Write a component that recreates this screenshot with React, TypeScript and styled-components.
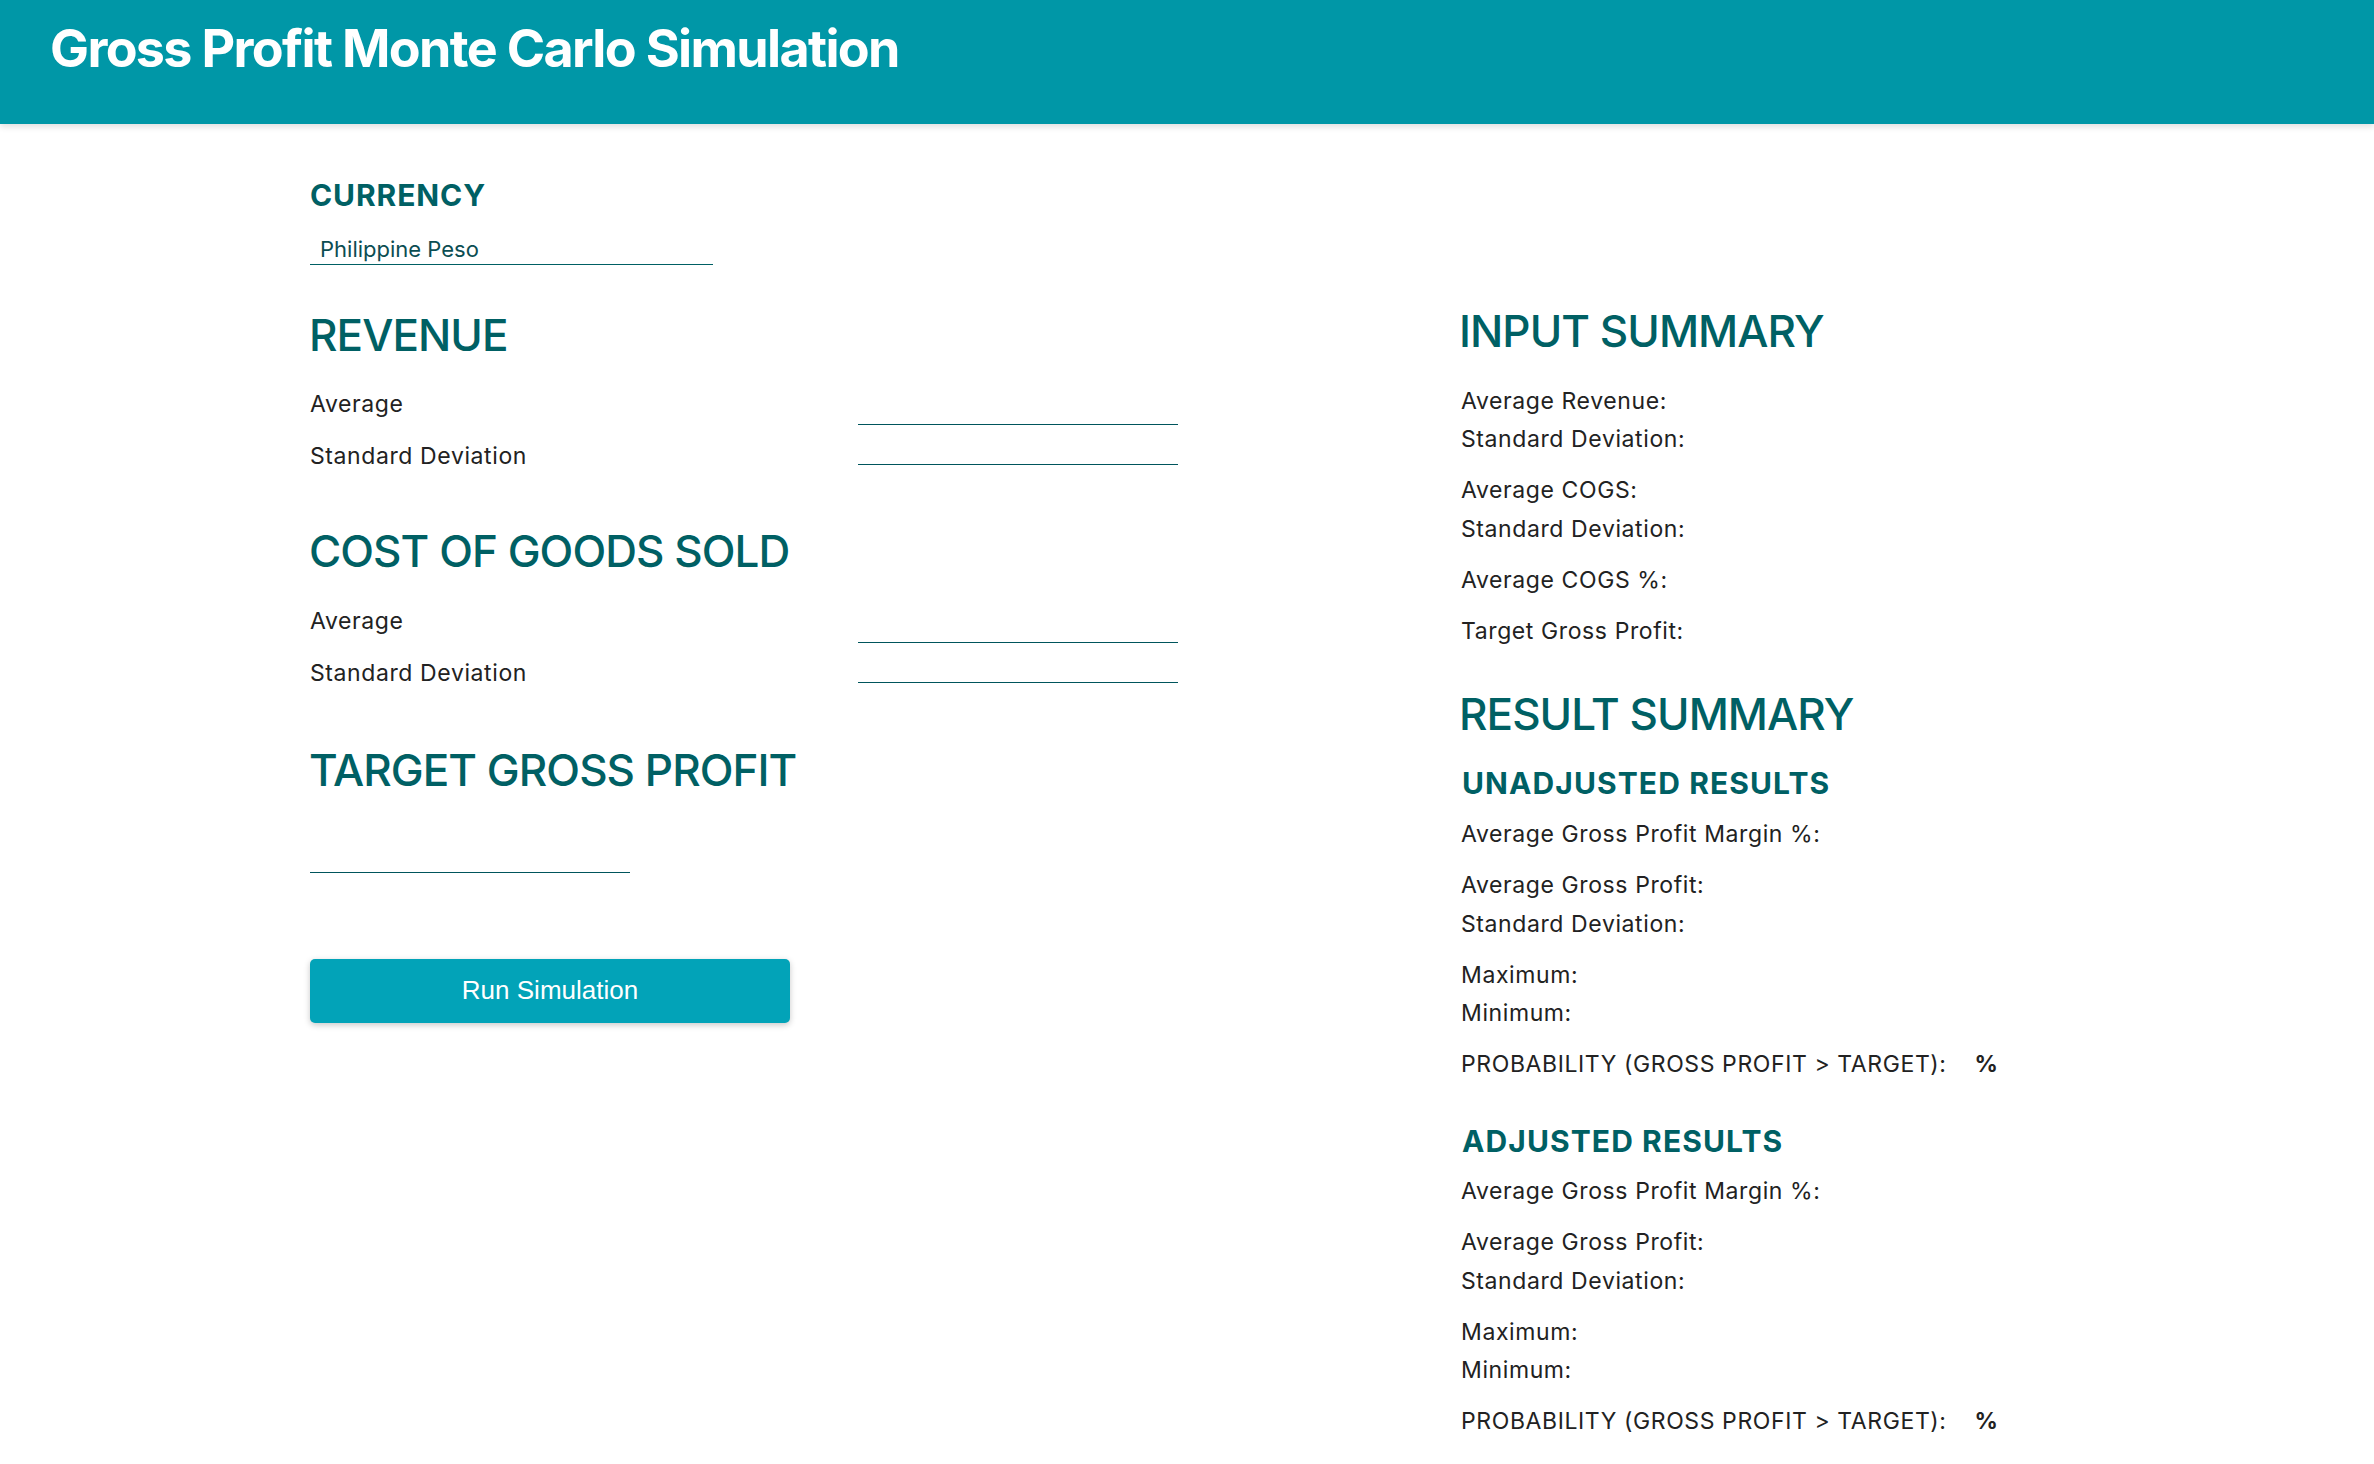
import React from "react";
import styled, { createGlobalStyle } from "styled-components";

const GlobalStyle = createGlobalStyle`
  html, body {
    margin: 0;
    padding: 0;
    background: #ffffff;
    font-family: Inter, "Noto Sans", "Liberation Sans", sans-serif;
    color: #222222;
  }
  * { box-sizing: border-box; }
`;

const Header = styled.header`
  height: 124px;
  background: #0097a7;
  padding: 18px 0 0 50px;
  box-shadow: 0 3px 6px rgba(0, 0, 0, 0.12);
  position: relative;
  z-index: 1;
`;

const Title = styled.h1`
  margin: 0;
  font-family: Inter, "Liberation Sans", sans-serif;
  font-weight: 700;
  font-size: 52px;
  line-height: 62.4px;
  color: #ffffff;
  letter-spacing: -1.65px;
`;

const Main = styled.main`
  display: grid;
  grid-template-columns: 1150px 1fr;
  padding: 53px 0 24px 310px;
`;

const LeftColumn = styled.section`
  display: flex;
  flex-direction: column;
`;

const RightColumn = styled.section`
  display: flex;
  flex-direction: column;
  padding-top: 127.6px;
`;

const FieldLabel = styled.label`
  display: block;
  font-weight: 700;
  font-size: 30px;
  line-height: 36px;
  color: #006064;
  letter-spacing: 0.9px;
`;

const CurrencySelect = styled.select`
  appearance: none;
  -webkit-appearance: none;
  margin-top: 16px;
  width: 403px;
  height: 36px;
  padding: 4px 0 0 10px;
  border: none;
  border-bottom: 1px solid #006064;
  border-radius: 0;
  background: transparent;
  font-family: Inter, "Liberation Sans", sans-serif;
  font-size: 22px;
  color: #0b4d52;
  outline: none;
`;

const SectionTitle = styled.h2<{ $top?: number }>`
  margin: ${(p) => p.$top ?? 0}px 0 0 -1px;
  font-weight: 500;
  font-size: 44px;
  line-height: 52.8px;
  color: #006064;
  letter-spacing: -0.95px;
`;

const SubTitle = styled.h3<{ $top?: number }>`
  margin: ${(p) => p.$top ?? 0}px 0 0 0;
  font-weight: 700;
  font-size: 30px;
  line-height: 36px;
  color: #006064;
  padding-left: 2px;
  letter-spacing: 1.1px;
`;

const FieldGrid = styled.div<{ $inputOffset: number }>`
  display: grid;
  grid-template-columns: 548px 320px;
  margin-top: 24px;

  & > div:last-child {
    padding-top: ${(p) => p.$inputOffset}px;
  }
`;

const LabelStack = styled.div`
  display: flex;
  flex-direction: column;
  gap: 14px;
`;

const InputStack = styled.div`
  display: flex;
  flex-direction: column;
  gap: 10px;
`;

const RowLabel = styled.span`
  font-size: 23px;
  line-height: 38px;
  color: #222222;
  letter-spacing: 0.6px;
`;

const LineInput = styled.input<{ $top?: number }>`
  display: block;
  width: 320px;
  height: 30px;
  margin-top: ${(p) => p.$top ?? 0}px;
  padding: 0 4px;
  border: none;
  border-bottom: 1px solid #00555c;
  background: transparent;
  font-family: Inter, "Liberation Sans", sans-serif;
  font-size: 22px;
  outline: none;
`;

const RunButton = styled.button`
  margin-top: 86px;
  width: 480px;
  height: 64px;
  border: none;
  border-radius: 5px;
  background: #02a3b8;
  color: #ffffff;
  font-family: "Liberation Sans", Arial, sans-serif;
  font-size: 26px;
  box-shadow: 0 2px 6px rgba(0, 0, 0, 0.22);
  cursor: pointer;
`;

const SummaryList = styled.div<{ $top: number }>`
  display: flex;
  flex-direction: column;
  gap: 12.5px;
  margin-top: ${(p) => p.$top}px;
  padding-left: 1px;
`;

const SummaryGroup = styled.div`
  display: flex;
  flex-direction: column;
`;

const SummaryRow = styled.div`
  font-size: 23px;
  line-height: 38.5px;
  color: #222222;
  white-space: nowrap;
  letter-spacing: 0.6px;
`;

const Percent = styled.span`
  font-weight: 700;
  margin-left: 28px;
`;

type Group = string[];

const inputGroups: Group[] = [
  ["Average Revenue:", "Standard Deviation:"],
  ["Average COGS:", "Standard Deviation:"],
  ["Average COGS %:"],
  ["Target Gross Profit:"],
];

const resultGroups: Group[] = [
  ["Average Gross Profit Margin %:"],
  ["Average Gross Profit:", "Standard Deviation:"],
  ["Maximum:", "Minimum:"],
];

function Results({ top }: { top: number }) {
  return (
    <SummaryList $top={top}>
      {resultGroups.map((g, i) => (
        <SummaryGroup key={i}>
          {g.map((r) => (
            <SummaryRow key={r}>{r}</SummaryRow>
          ))}
        </SummaryGroup>
      ))}
      <SummaryGroup>
        <SummaryRow>
          PROBABILITY (GROSS PROFIT &gt; TARGET):<Percent>%</Percent>
        </SummaryRow>
      </SummaryGroup>
    </SummaryList>
  );
}

function Fields({ offset }: { offset: number }) {
  return (
    <FieldGrid $inputOffset={offset}>
      <LabelStack>
        <RowLabel>Average</RowLabel>
        <RowLabel>Standard Deviation</RowLabel>
      </LabelStack>
      <InputStack>
        <LineInput type="text" aria-label="Average" />
        <LineInput type="text" aria-label="Standard Deviation" />
      </InputStack>
    </FieldGrid>
  );
}

export default function App() {
  return (
    <>
      <GlobalStyle />
      <Header>
        <Title>Gross Profit Monte Carlo Simulation</Title>
      </Header>
      <Main>
        <LeftColumn>
          <FieldLabel htmlFor="currency">CURRENCY</FieldLabel>
          <CurrencySelect id="currency" defaultValue="PHP">
            <option value="PHP">Philippine Peso</option>
            <option value="USD">US Dollar</option>
          </CurrencySelect>

          <SectionTitle $top={43.6}>REVENUE</SectionTitle>
          <Fields offset={9.5} />

          <SectionTitle $top={50}>COST OF GOODS SOLD</SectionTitle>
          <Fields offset={11} />

          <SectionTitle $top={52}>TARGET GROSS PROFIT</SectionTitle>
          <LineInput $top={45.6} type="text" aria-label="Target Gross Profit" />

          <div>
            <RunButton type="button">Run Simulation</RunButton>
          </div>
        </LeftColumn>

        <RightColumn>
          <SectionTitle>INPUT SUMMARY</SectionTitle>
          <SummaryList $top={24.2}>
            {inputGroups.map((g, i) => (
              <SummaryGroup key={i}>
                {g.map((r, j) => (
                  <SummaryRow key={j}>{r}</SummaryRow>
                ))}
              </SummaryGroup>
            ))}
          </SummaryList>

          <SectionTitle $top={37.5}>RESULT SUMMARY</SectionTitle>
          <SubTitle $top={24.7}>UNADJUSTED RESULTS</SubTitle>
          <Results top={14.3} />

          <SubTitle $top={39.2}>ADJUSTED RESULTS</SubTitle>
          <Results top={13.4} />
        </RightColumn>
      </Main>
    </>
  );
}
